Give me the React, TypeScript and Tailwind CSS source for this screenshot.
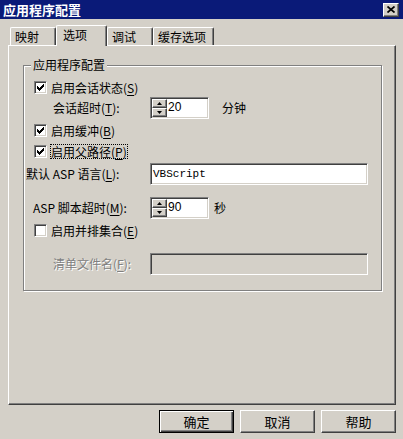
import React from "react";

const sunken =
  "border border-t-[#808080] border-l-[#808080] border-r-white border-b-white shadow-[inset_1px_1px_0_#404040,inset_-1px_-1px_0_#d4d0c8]";

function Check({ checked }: { checked?: boolean }) {
  return (
    <div className={`flex h-[13px] w-[13px] shrink-0 items-center justify-center bg-white ${sunken}`}>
      {checked && (
        <svg width="7" height="7" viewBox="0 0 7 7" shapeRendering="crispEdges">
          <polygon points="0,2 2,4 7,-1 7,2 2,7 0,5" fill="#000" />
        </svg>
      )}
    </div>
  );
}

function SpinBtn({ up }: { up?: boolean }) {
  return (
    <div className="flex h-[9px] w-[15px] items-center justify-center border border-t-white border-l-white border-r-[#404040] border-b-[#404040] bg-[#d4d0c8] shadow-[inset_-1px_-1px_0_#808080]">
      <svg width="5" height="3" viewBox="0 0 5 3">
        {up ? <polygon points="2.5,0 5,3 0,3" fill="#000" /> : <polygon points="0,0 5,0 2.5,3" fill="#000" />}
      </svg>
    </div>
  );
}

function Spinner({ value }: { value: string }) {
  return (
    <div className={`flex h-[22px] w-[59px] shrink-0 bg-white p-[1px] ${sunken}`}>
      <div className="flex flex-col">
        <SpinBtn up />
        <SpinBtn />
      </div>
      <span className="pl-[1px] pt-[2px] font-['Liberation_Sans',sans-serif] text-[12px] leading-[13px] text-black">
        {value}
      </span>
    </div>
  );
}

function TextBox({ value, disabled }: { value?: string; disabled?: boolean }) {
  return (
    <div
      className={`flex h-[22px] w-[218px] shrink-0 items-center px-[2px] ${sunken} ${
        disabled ? "bg-[#d4d0c8]" : "bg-white"
      }`}
    >
      <span className="font-['Liberation_Mono',monospace] text-[11px] leading-[14px] text-black">{value}</span>
    </div>
  );
}

function Key({ k }: { k: string }) {
  return (
    <>
      (<span className="underline underline-offset-2">{k}</span>)
    </>
  );
}

function Btn({ label, isDefault }: { label: string; isDefault?: boolean }) {
  return (
    <div
      className={`flex h-[23px] w-[75px] items-center justify-center bg-[#d4d0c8] text-[13px] leading-[15px] text-black ${
        isDefault
          ? "border border-black shadow-[inset_1px_1px_0_#fff,inset_-1px_-1px_0_#404040,inset_-2px_-2px_0_#808080]"
          : "border border-t-white border-l-white border-r-[#404040] border-b-[#404040] shadow-[inset_-1px_-1px_0_#808080]"
      }`}
    >
      {label}
    </div>
  );
}

function Tab({ label, width, active }: { label: string; width: string; active?: boolean }) {
  if (active) {
    return (
      <div
        className={`relative z-10 -mb-px h-[21px] ${width} rounded-t-[2px] border-l border-t border-r border-l-white border-t-white border-r-[#404040] bg-[#d4d0c8] pl-[6px] pt-[1px] leading-[15px] shadow-[inset_-1px_0_0_#808080]`}
      >
        {label}
      </div>
    );
  }
  return (
    <div
      className={`h-[18px] ${width} rounded-t-[2px] border-l border-t border-r border-l-white border-t-white border-r-[#404040] pl-[4px] pt-[1px] leading-[15px] shadow-[inset_-1px_0_0_#808080]`}
    >
      {label}
    </div>
  );
}

export default function App() {
  return (
    <div className="flex h-[439px] w-[403px] flex-col overflow-hidden bg-[#d4d0c8] font-['Noto_Sans_CJK_SC','Liberation_Sans',sans-serif] text-[12px] text-black">
      {/* Title bar */}
      <div className="flex h-[19px] shrink-0 items-center justify-between bg-[#0a1a78] pl-[3px] pr-[4px]">
        <span className="text-[13px] font-bold leading-[15px] text-white">应用程序配置</span>
        <div className="flex h-[14px] w-[16px] items-center justify-center border border-t-white border-l-white border-r-[#404040] border-b-[#404040] bg-[#d4d0c8] shadow-[inset_-1px_-1px_0_#808080]">
          <svg width="8" height="7" viewBox="0 0 8 7">
            <path d="M0.5 0.5L7.5 6.5M7.5 0.5L0.5 6.5" stroke="#000" strokeWidth="1.7" />
          </svg>
        </div>
      </div>

      {/* Tabs */}
      <div className="flex h-[26px] shrink-0 items-end pl-[10px]">
        <Tab label="映射" width="w-[46px]" />
        <Tab label="选项" width="w-[51px]" active />
        <Tab label="调试" width="w-[46px]" />
        <Tab label="缓存选项" width="w-[61px]" />
      </div>

      {/* Tab panel */}
      <div className="ml-[8px] h-[360px] w-[388px] shrink-0 border border-t-white border-l-white border-r-[#404040] border-b-[#404040] shadow-[inset_-1px_-1px_0_#808080]">
        <div className="relative ml-[14px] mt-[19px] w-[359px] border border-[#808080] pb-[15px] pt-[14px] shadow-[inset_1px_1px_0_#fff,1px_1px_0_#fff]">
          <span className="absolute left-[7px] top-[-9px] bg-[#d4d0c8] px-[2px] leading-[15px]">应用程序配置</span>

          <div className="flex h-[15px] items-center pl-[10px]">
            <Check checked />
            <span className="ml-[4px] leading-[15px]">
              启用会话状态<Key k="S" />
            </span>
          </div>

          <div className="mt-[2px] flex h-[22px] items-center pl-[29px]">
            <span className="w-[97px] shrink-0">
              会话超时<Key k="T" />:
            </span>
            <Spinner value="20" />
            <span className="ml-[13px]">分钟</span>
          </div>

          <div className="mt-[4px] flex h-[15px] items-center pl-[10px]">
            <Check checked />
            <span className="ml-[4px] leading-[15px]">
              启用缓冲<Key k="B" />
            </span>
          </div>

          <div className="mt-[6px] flex h-[15px] items-center pl-[10px]">
            <Check checked />
            <span className="ml-[3px] border border-dotted border-black leading-[13px]">
              启用父路径<Key k="P" />
            </span>
          </div>

          <div className="mt-[4px] flex h-[22px] items-center pl-[2px]">
            <span className="w-[124px] shrink-0">
              默认 ASP 语言<Key k="L" />:
            </span>
            <TextBox value="VBScript" />
          </div>

          <div className="mt-[12px] flex h-[22px] items-center pl-[9px]">
            <span className="w-[117px] shrink-0">
              ASP 脚本超时<Key k="M" />:
            </span>
            <Spinner value="90" />
            <span className="ml-[5px]">秒</span>
          </div>

          <div className="mt-[4px] flex h-[15px] items-center pl-[10px]">
            <Check />
            <span className="ml-[4px] leading-[15px]">
              启用并排集合<Key k="E" />
            </span>
          </div>

          <div className="mt-[15px] flex h-[22px] items-center pl-[29px]">
            <span className="w-[97px] shrink-0 text-[#808080] [text-shadow:1px_1px_0_#fff]">
              清单文件名<Key k="F" />:
            </span>
            <TextBox disabled />
          </div>
        </div>
      </div>

      {/* Buttons */}
      <div className="mt-[5px] flex shrink-0 justify-end gap-[6px] pr-[7px]">
        <Btn label="确定" isDefault />
        <Btn label="取消" />
        <Btn label="帮助" />
      </div>
    </div>
  );
}
